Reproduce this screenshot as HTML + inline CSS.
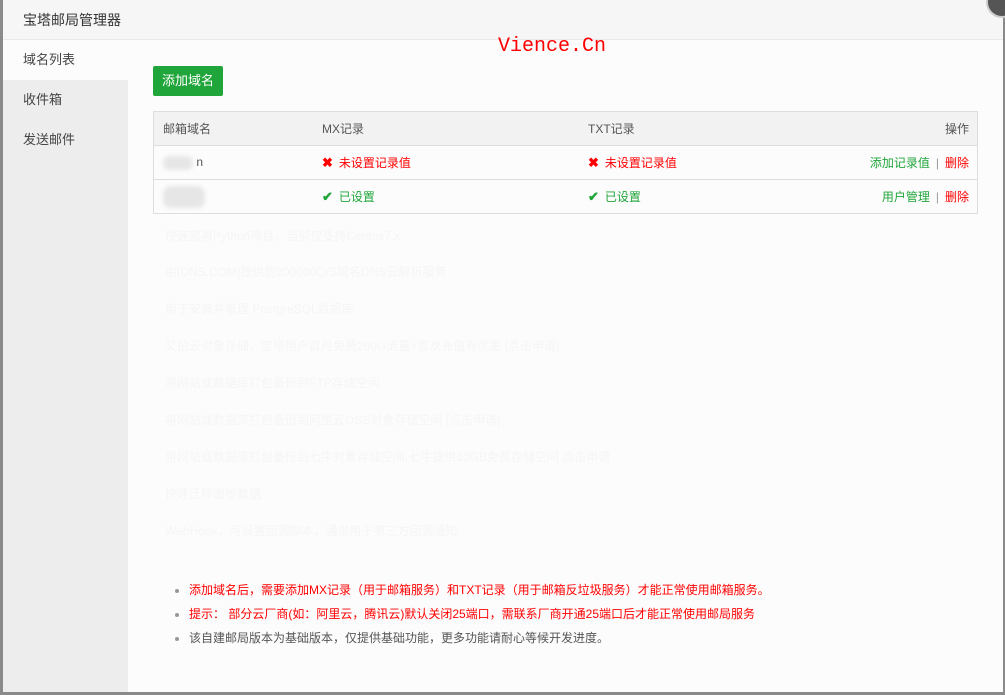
<!DOCTYPE html>
<html><head><meta charset="utf-8"><style>
body{margin:0;width:1005px;height:695px;background:#8a8a8a;position:relative;overflow:hidden;font-family:"Liberation Sans","Noto Sans CJK SC",sans-serif;font-size:12px;color:#555}
.modal{position:absolute;left:3px;top:0;width:1000px;height:692px;background:#fcfcfc}
.title{position:absolute;left:0;top:0;width:1000px;height:40px;background:#f6f6f6;border-bottom:1px solid #eaeaea;box-sizing:border-box;font-size:14px;color:#333;line-height:40px;padding-left:20px}
.side{position:absolute;left:0;top:40px;width:125px;height:652px;background:#ededed}
.side div{height:40px;line-height:40px;padding-left:20px;font-size:13px;color:#444}
.side .act{background:#fcfcfc}
.btn{position:absolute;left:150px;top:66px;width:70px;height:30px;background:#20a53a;color:#fff;font-size:13px;line-height:30px;text-align:center;border-radius:2px}
table{position:absolute;left:150px;top:111px;width:825px;border-collapse:collapse;border:1px solid #ddd}
td,th{height:33px;border-top:1px solid #ddd;font-weight:normal;text-align:left;padding:0 0 0 9px;font-size:12px;color:#555}
th{background:#f2f2f2}
.r{color:#f00}.g{color:#20a53a}
.ic{font-weight:bold;margin-right:6px;font-size:13px}
.ops{text-align:right;padding-right:8px}
.sep{color:#999;margin:0 6px}
.blur{display:inline-block;background:#e6e6e6;border-radius:8px;filter:blur(2px)}
ul{position:absolute;left:170px;top:578px;margin:0;padding:0 0 0 16px;font-size:12px}
li{height:24px;line-height:24px;color:#999}
li span{color:#555}
.wm{position:absolute;left:495px;top:35px;font-family:"Liberation Mono",monospace;font-size:20px;color:#f00}
.close{position:absolute;left:986px;top:-14px;width:28px;height:28px;border-radius:50%;background:#555;border:2px solid #ccc}
.faint{position:absolute;color:#f5f5f5;font-size:12px}
</style></head><body>
<div class="modal">
<div class="title">宝塔邮局管理器</div>
<div class="side"><div class="act">域名列表</div><div>收件箱</div><div>发送邮件</div></div>
<div class="faint" style="left:162px;top:227px">快速部署Python项目，当前仅支持Centos7.x</div>
<div class="faint" style="left:162px;top:263px">由[DNS.COM]提供的200000Q/S域名DNS云解析服务</div>
<div class="faint" style="left:162px;top:300px">用于安装并管理 PostgreSQL数据库</div>
<div class="faint" style="left:162px;top:337px">又拍云对象存储，宝塔用户首月免费200G流量+首次充值有优惠 [点击申请]</div>
<div class="faint" style="left:162px;top:374px">将网站或数据库打包备份到FTP存储空间</div>
<div class="faint" style="left:162px;top:411px">将网站或数据库打包备份到阿里云OSS对象存储空间 [点击申请]</div>
<div class="faint" style="left:162px;top:448px">将网站或数据库打包备份到七牛对象存储空间,七牛提供10GB免费存储空间 点击申请</div>
<div class="faint" style="left:162px;top:485px">快速迁移面板数据</div>
<div class="faint" style="left:162px;top:522px">WebHook，可设置回调脚本，通常用于第三方回调通知</div>
<div class="wm">Vience.Cn</div>
<div class="btn">添加域名</div>
<table>
<tr><th style="width:150px">邮箱域名</th><th style="width:257px">MX记录</th><th>TXT记录</th><th class="ops">操作</th></tr>
<tr><td><span class="blur" style="width:30px;height:14px;vertical-align:middle"></span>&nbsp;n</td><td class="r"><span class="ic">✖</span>未设置记录值</td><td class="r"><span class="ic">✖</span>未设置记录值</td><td class="ops"><span class="g">添加记录值</span><span class="sep">|</span><span class="r">删除</span></td></tr>
<tr><td><span class="blur" style="width:42px;height:22px;vertical-align:middle"></span></td><td class="g"><span class="ic">✔</span>已设置</td><td class="g"><span class="ic">✔</span>已设置</td><td class="ops"><span class="g">用户管理</span><span class="sep">|</span><span class="r">删除</span></td></tr>
</table>
<ul>
<li><span class="r">添加域名后，需要添加MX记录（用于邮箱服务）和TXT记录（用于邮箱反垃圾服务）才能正常使用邮箱服务。</span></li>
<li><span class="r">提示： 部分云厂商(如：阿里云，腾讯云)默认关闭25端口，需联系厂商开通25端口后才能正常使用邮局服务</span></li>
<li><span>该自建邮局版本为基础版本，仅提供基础功能，更多功能请耐心等候开发进度。</span></li>
</ul>
</div>
<div class="close"></div>
</body></html>
